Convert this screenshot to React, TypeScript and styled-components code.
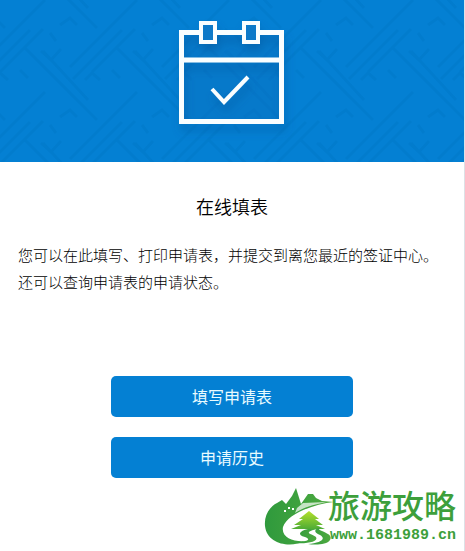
import React from "react";
import styled, { createGlobalStyle } from "styled-components";

const GlobalStyle = createGlobalStyle`
  * { box-sizing: border-box; }
  body {
    margin: 0;
    background: #fff;
    color: #000;
    font-family: "Liberation Sans", "Noto Sans CJK SC", sans-serif;
  }
`;

const Card = styled.main`
  position: relative;
  min-height: 100vh;
  border-right: 1px solid #dde1e6;
  background: #fff;
`;

const Hero = styled.header`
  position: relative;
  display: flex;
  justify-content: center;
  padding: 16px 0 10px;
  background: #0480d3;
`;

const Lattice = styled.svg`
  position: absolute;
  inset: 0;
  width: 100%;
  height: 100%;
`;

const CalendarIcon = styled.svg`
  position: relative;
  display: block;
  width: 136px;
  height: 136px;
`;

const Content = styled.section`
  padding: 30px 18px 0;
`;

const Title = styled.h1`
  margin: 0;
  font-family: "Noto Sans CJK SC", sans-serif;
  font-size: 18px;
  font-weight: 350;
  line-height: 28px;
  text-align: center;
`;

const Description = styled.p`
  margin: 21px 0 0;
  font-family: "Noto Sans CJK SC", sans-serif;
  font-size: 15px;
  font-weight: 300;
  line-height: 27px;
  white-space: pre-line;
`;

const Actions = styled.div`
  display: flex;
  flex-direction: column;
  align-items: center;
  gap: 20px;
  padding-top: 81px;
`;

const ActionButton = styled.button`
  width: 52%;
  height: 41px;
  padding: 0 0 2px;
  border: 0;
  border-radius: 5px;
  background: #0480d3;
  color: #e9fbff;
  font-family: "Noto Sans CJK SC", sans-serif;
  font-size: 16px;
  cursor: pointer;
`;

const Watermark = styled.a`
  position: absolute;
  right: 8px;
  bottom: 4px;
  display: flex;
  align-items: center;
  color: #3d9f3b;
  text-decoration: none;
`;

const Landscape = styled.svg`
  width: 70px;
  height: 60px;
  margin-right: -6px;
`;

const WatermarkText = styled.span`
  display: flex;
  flex-direction: column;
  align-items: flex-end;
`;

const SiteName = styled.span`
  font-size: 32px;
  font-weight: 500;
  line-height: 38px;
`;

const SiteAddress = styled.span`
  font-family: "Liberation Mono", monospace;
  font-size: 15px;
  font-weight: 700;
  line-height: 20px;
`;

const tileOffsets = [-92, 0, 92];

function HeroPattern() {
  return (
    <Lattice aria-hidden="true">
      <defs>
        <g id="strokes">
          <path d="M25 48L97 120M43 51L88 100M70 67L137 0M73 79L122 30M0 72L43 29" />
          <path d="M41 51L51 60L61 49M60 25L70 18L77 25M20 70L28 78M85 80L92 73L100 80M50 125L56 133" />
        </g>
        <pattern id="lattice" width="92" height="92" patternUnits="userSpaceOnUse">
          <g fill="none" stroke="#0077c8" strokeWidth="3" opacity="0.5">
            {tileOffsets.map((x) =>
              tileOffsets.map((y) => <use key={`${x},${y}`} href="#strokes" x={x} y={y} />)
            )}
          </g>
        </pattern>
      </defs>
      <rect width="100%" height="100%" fill="url(#lattice)" />
    </Lattice>
  );
}

function Calendar() {
  return (
    <CalendarIcon viewBox="0 0 136 136" aria-hidden="true">
      <defs>
        <filter id="shadow" x="-20%" y="-20%" width="140%" height="150%">
          <feDropShadow dx="2" dy="7" stdDeviation="4" floodColor="#064f92" floodOpacity="0.4" />
        </filter>
      </defs>
      <path d="M17 16H117V105H17Z" fill="#0a6fbd" opacity="0.4" />
      <g filter="url(#shadow)" fill="none" stroke="#fafeff">
        <path d="M17.500 16.500H117.500V105.500H17.500ZM17.500 44H117.500" strokeWidth="5" />
        <path d="M37 7H51V26H37ZM80 7H94V26H80Z" fill="#0879c8" strokeWidth="4" />
        <path d="M48 73L60 86L84 61" strokeWidth="4" />
      </g>
    </CalendarIcon>
  );
}

function Mountains() {
  return (
    <Landscape viewBox="0 0 70 60" aria-hidden="true">
      <defs>
        <linearGradient id="hill" x1="0" y1="0" x2="1" y2="0">
          <stop offset="0" stopColor="#2f9a3d" />
          <stop offset="1" stopColor="#4faa3f" />
        </linearGradient>
        <linearGradient id="tree" x1="0" y1="0" x2="0" y2="1">
          <stop offset="0" stopColor="#b4e02c" />
          <stop offset="1" stopColor="#4eac35" />
        </linearGradient>
      </defs>
      <path fill="url(#hill)" d="M1 39C0 29 5 20 13 16L18 13L22 17L28 9L32 1L37 17L44 7L49 7L52 11L58 14L70 15C50 17 23 27 19 40C17 50 29 55 41 54C27 61 3 58 1 39Z" />
      <path fill="#fff" d="M33 21L39 16L62 15C50 18 42 19 31 26Z" opacity="0.7" />
      <path fill="#fff" d="M20 23h2v2h-2zM24 20h2v2h-2zM28 21h2v2h-2z" />
      <path fill="url(#tree)" d="M45 24L55 32H51L59 38H52L61 42H27L37 38H30L39 32H35Z" />
      <path fill="url(#hill)" d="M34 42H53C37 46 49 47 52 50C55 55 42 57 31 56C43 54 48 53 41 50C33 48 35 44 44 42Z" />
      <path fill="url(#hill)" d="M57 40C48 44 71 45 66 53C63 58 51 58 44 57C56 56 63 52 56 48C49 45 50 42 57 40Z" />
    </Landscape>
  );
}

export default function App() {
  return (
    <>
      <GlobalStyle />
      <Card>
        <Hero>
          <HeroPattern />
          <Calendar />
        </Hero>
        <Content>
          <Title>在线填表</Title>
          <Description>
            {"您可以在此填写、打印申请表，并提交到离您最近的签证中心。\n还可以查询申请表的申请状态。"}
          </Description>
        </Content>
        <Actions>
          <ActionButton type="button">填写申请表</ActionButton>
          <ActionButton type="button">申请历史</ActionButton>
        </Actions>
        <Watermark href="#">
          <Mountains />
          <WatermarkText>
            <SiteName lang="zh-CN">旅游攻略</SiteName>
            <SiteAddress>www.1681989.cn</SiteAddress>
          </WatermarkText>
        </Watermark>
      </Card>
    </>
  );
}
